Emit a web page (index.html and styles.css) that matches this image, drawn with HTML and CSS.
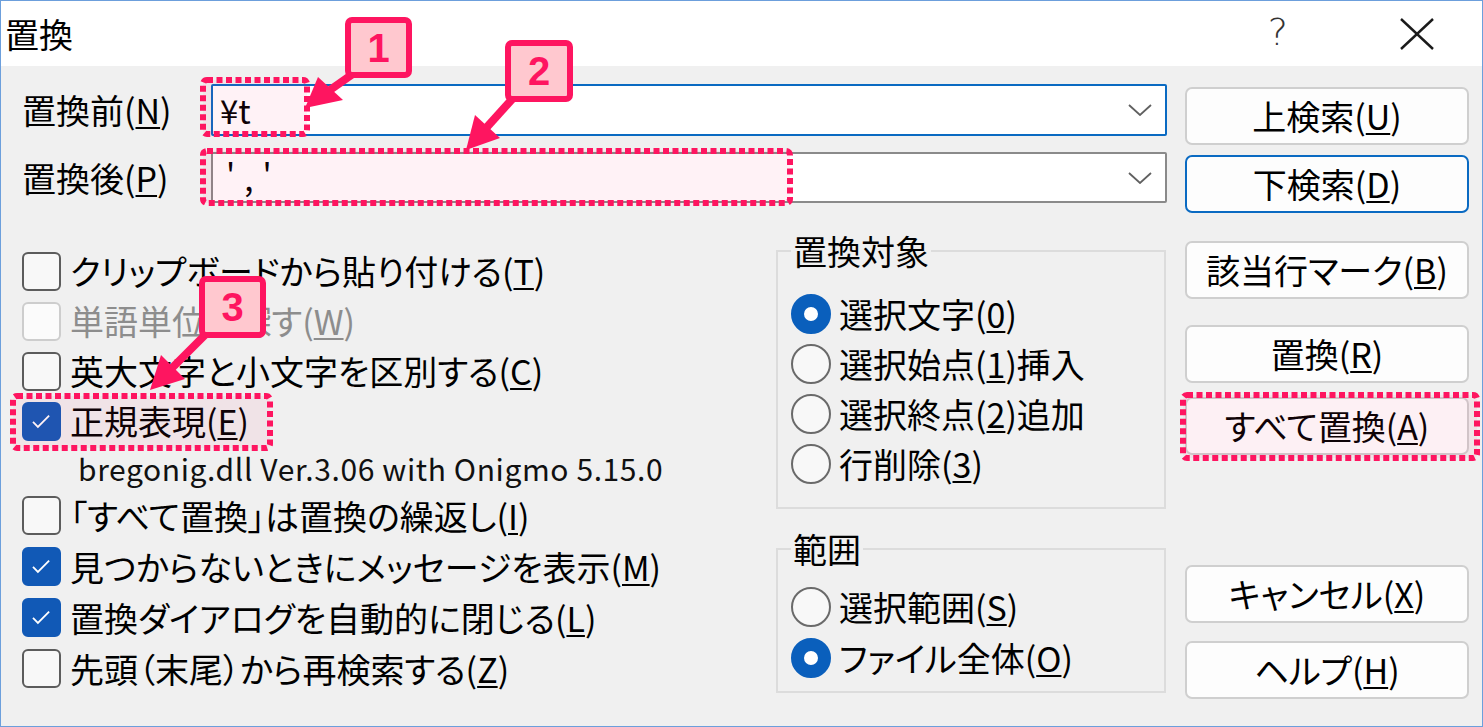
FILE: index.html
```html
<!DOCTYPE html>
<html lang="ja">
<head>
<meta charset="utf-8">
<title>置換</title>
<link rel="stylesheet" href="styles.css">
</head>
<body>
<div class="window">
  <div class="titlebar">
    <span class="title">置換</span>
    <span class="help">?</span>
    <svg class="close" viewBox="0 0 34 32"><line x1="1" y1="1" x2="33" y2="31"/><line x1="33" y1="1" x2="1" y2="31"/></svg>
  </div>
  <div class="main">
    <div class="left">
      <div class="field">
        <label class="flabel">置換前(<u>N</u>)</label>
        <div class="combo focus"><span class="val">¥t</span><svg class="chev" viewBox="0 0 24 12"><polyline points="1,1 12,11 23,1"/></svg></div>
      </div>
      <div class="field">
        <label class="flabel">置換後(<u>P</u>)</label>
        <div class="combo"><span class="val quote">','</span><svg class="chev" viewBox="0 0 24 12"><polyline points="1,1 12,11 23,1"/></svg></div>
      </div>
      <div class="lower">
        <div class="checks">
          <div class="chk"><span class="box"></span><span>クリップボードから貼り付ける(<u>T</u>)</span></div>
          <div class="chk dis"><span class="box"></span><span>単語単位で探す(<u>W</u>)</span></div>
          <div class="chk"><span class="box"></span><span>英大文字と小文字を区別する(<u>C</u>)</span></div>
          <div class="chk"><span class="box on"><svg viewBox="0 0 39 39"><polyline points="10,20 15.5,25.5 28,13"/></svg></span><span>正規表現(<u>E</u>)</span></div>
          <div class="ver">bregonig.dll Ver.3.06 with Onigmo 5.15.0</div>
          <div class="chk tall"><span class="box"></span><span>「すべて置換」は置換の繰返し(<u>I</u>)</span></div>
          <div class="chk tall"><span class="box on"><svg viewBox="0 0 39 39"><polyline points="10,20 15.5,25.5 28,13"/></svg></span><span>見つからないときにメッセージを表示(<u>M</u>)</span></div>
          <div class="chk tall"><span class="box on"><svg viewBox="0 0 39 39"><polyline points="10,20 15.5,25.5 28,13"/></svg></span><span>置換ダイアログを自動的に閉じる(<u>L</u>)</span></div>
          <div class="chk tall"><span class="box"></span><span>先頭（末尾）から再検索する(<u>Z</u>)</span></div>
        </div>
        <div class="groups">
          <fieldset class="grp g1">
            <legend>置換対象</legend>
            <div class="radio"><span class="dot on"></span><span>選択文字(<u>0</u>)</span></div>
            <div class="radio"><span class="dot"></span><span>選択始点(<u>1</u>)挿入</span></div>
            <div class="radio"><span class="dot"></span><span>選択終点(<u>2</u>)追加</span></div>
            <div class="radio"><span class="dot"></span><span>行削除(<u>3</u>)</span></div>
          </fieldset>
          <fieldset class="grp g2">
            <legend>範囲</legend>
            <div class="radio"><span class="dot"></span><span>選択範囲(<u>S</u>)</span></div>
            <div class="radio"><span class="dot on"></span><span>ファイル全体(<u>O</u>)</span></div>
          </fieldset>
        </div>
      </div>
    </div>
    <div class="buttons">
      <div class="btn b1">上検索(<u>U</u>)</div>
      <div class="btn b2 default">下検索(<u>D</u>)</div>
      <div class="btn b3">該当行マーク(<u>B</u>)</div>
      <div class="btn b4">置換(<u>R</u>)</div>
      <div class="btn b5">すべて置換(<u>A</u>)</div>
      <div class="btn b6">キャンセル(<u>X</u>)</div>
      <div class="btn b7">ヘルプ(<u>H</u>)</div>
    </div>
  </div>
</div>
<svg class="annot" width="1483" height="727" viewBox="0 0 1483 727">
  <g class="dots">
    <rect x="203" y="80" width="104" height="54" rx="4"/>
    <rect x="203" y="151" width="587" height="52" rx="4"/>
    <rect x="13" y="396" width="257" height="52" rx="4"/>
    <rect x="1183" y="395" width="294" height="63" rx="4"/>
  </g>
  <g class="arrows">
    <line x1="357" y1="71" x2="330" y2="90"/>
    <polygon points="305,108 318,77 343,100"/>
    <line x1="515" y1="96" x2="487" y2="127"/>
    <polygon points="466,150 475,115 500,138"/>
    <line x1="210" y1="330" x2="172" y2="368"/>
    <polygon points="150,390 161,355 185,379"/>
  </g>
  <g class="badges">
    <rect x="348" y="20" width="61" height="55" rx="4"/>
    <rect x="508" y="43" width="62" height="56" rx="4"/>
    <rect x="202" y="279" width="61" height="56" rx="4"/>
  </g>
  <g class="nums">
    <text x="378.5" y="48">1</text>
    <text x="539" y="71">2</text>
    <text x="232.5" y="307">3</text>
  </g>
</svg>
</body>
</html>
```

FILE: styles.css
```css
* { box-sizing: border-box; }
html, body { margin: 0; padding: 0; }
body {
  width: 1483px;
  height: 727px;
  position: relative;
  overflow: hidden;
  background: #fff;
  color: #000;
  font-family: "Noto Sans CJK JP", sans-serif;
  font-feature-settings: "palt";
}
u {
  text-decoration: underline;
  text-decoration-thickness: 2px;
  text-underline-offset: 3px;
}
.window {
  width: 1483px;
  height: 727px;
  border: 1px solid #6c9fdc;
  background: #f0f0f0;
  display: flex;
  flex-direction: column;
}
.titlebar {
  height: 65px;
  flex: none;
  background: #fff;
  display: flex;
  align-items: center;
  padding-left: 4px;
}
.title { flex: 1; font-size: 34px; line-height: 1; }
.help {
  font-size: 38px;
  line-height: 1;
  color: #333;
  font-weight: 300;
  font-family: "DejaVu Sans", sans-serif;
  margin-top: -4px;
}
.close {
  width: 34px;
  height: 32px;
  margin-left: 112px;
  margin-right: 48px;
}
.close line { stroke: #1a1a1a; stroke-width: 2.4; }
.main {
  flex: 1;
  display: flex;
  gap: 18px;
  padding: 18px 13px 0 21px;
}
.left { width: 1145px; display: flex; flex-direction: column; }
.field { display: flex; align-items: center; height: 52px; }
.field + .field { margin-top: 16px; height: 51px; }
.flabel { width: 189px; font-size: 34px; line-height: 1; }
.combo {
  flex: 1;
  height: 100%;
  background: #fff;
  border: 2px solid #8a8a8a;
  border-radius: 2px;
  display: flex;
  align-items: center;
  padding: 0 13px 0 7px;
}
.combo.focus { border-color: #0a6ac2; }
.val { flex: 1; font-size: 33px; line-height: 1; font-feature-settings: normal; }
.val.quote { padding-left: 6px; letter-spacing: 9px; }
.chev { width: 24px; height: 12px; }
.chev polyline { fill: none; stroke: #606060; stroke-width: 1.8; }
.lower { display: flex; margin-top: 30px; }
.checks { width: 754px; padding-top: 13px; }
.chk {
  display: flex;
  align-items: center;
  gap: 9px;
  height: 50px;
  font-size: 34px;
  line-height: 1;
  white-space: nowrap;
}
.chk.tall { height: 51px; }
.chk.dis { color: #8d8d8d; }
.box {
  flex: none;
  width: 39px;
  height: 39px;
  border: 2px solid #5c5c5c;
  border-radius: 6px;
  background: #f8f8f8;
}
.chk.dis .box { border-color: #cdcdcd; background: #fbfbfb; }
.box.on { background: #1159b6; border-color: #1159b6; }
.box svg { display: block; width: 35px; height: 35px; }
.box polyline { fill: none; stroke: #fff; stroke-width: 2; }
.ver {
  height: 44px;
  display: flex;
  align-items: center;
  padding-left: 56px;
  font-size: 30px;
  letter-spacing: 0.6px;
  line-height: 1;
  font-feature-settings: normal;
  color: #111;
}
.groups { width: 390px; }
.grp {
  margin: 0;
  min-width: 0;
  border: 2px solid #dcdcdc;
  padding: 20px 0 18px 13px;
}
.grp legend {
  padding: 0 2px;
  font-size: 34px;
  line-height: 36px;
}
.g2 { margin-top: 22px; padding: 14px 0 8px 13px; }
.g2 .radio { height: 51px; }
.radio {
  display: flex;
  align-items: center;
  gap: 8px;
  height: 50px;
  font-size: 34px;
  line-height: 1;
  white-space: nowrap;
}
.dot {
  flex: none;
  width: 40px;
  height: 40px;
  border-radius: 50%;
  border: 2px solid #6a6a6a;
  background: #f8f8f8;
}
.dot.on { border: 13px solid #0a5fbc; background: #fff; }
.buttons {
  width: 284px;
  display: flex;
  flex-direction: column;
  padding-top: 3px;
}
.btn {
  height: 58px;
  flex: none;
  border: 2px solid #cfcfcf;
  border-radius: 7px;
  background: #fdfdfd;
  font-size: 34px;
  line-height: 1;
  display: flex;
  align-items: center;
  justify-content: center;
}
.btn.default { border-color: #0a6ac2; }
.b2 { margin-top: 10px; }
.b3 { margin-top: 28px; }
.b4 { margin-top: 26px; }
.b5 { margin-top: 14px; }
.b6 { margin-top: 110px; }
.b7 { margin-top: 18px; }
.annot { position: absolute; left: 0; top: 0; pointer-events: none; }
.dots rect {
  fill: rgba(255, 40, 100, 0.06);
  stroke: #fe1560;
  stroke-width: 6;
  stroke-dasharray: 6 3.5;
}
.arrows line { stroke: #fe1560; stroke-width: 8; }
.arrows polygon { fill: #fe1560; }
.badges rect { fill: #ffc8cf; stroke: #fe1560; stroke-width: 6; }
.nums text {
  fill: #fe1560;
  font-family: "Liberation Sans", sans-serif;
  font-weight: 700;
  font-size: 40px;
  text-anchor: middle;
  dominant-baseline: central;
}
```
